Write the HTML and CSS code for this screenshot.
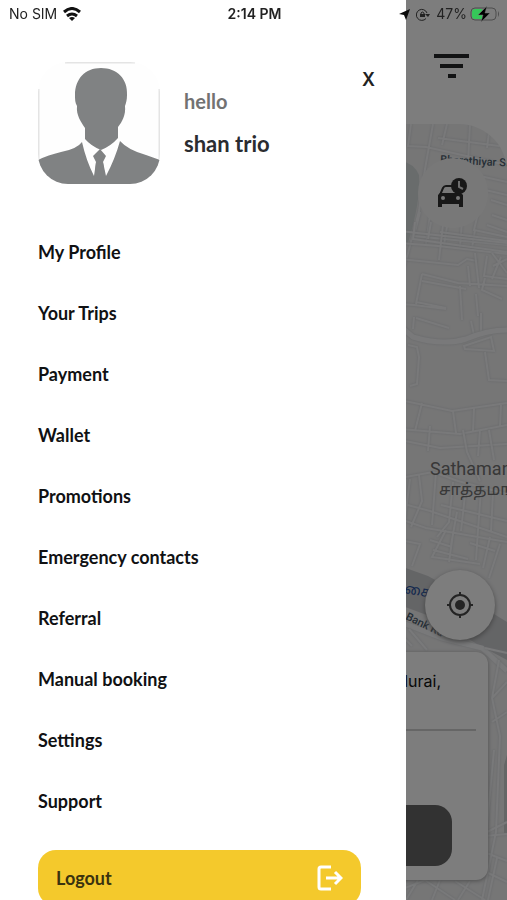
FILE: index.html
```html
<!DOCTYPE html>
<html lang="en">
<head>
<meta charset="utf-8">
<meta name="viewport" content="width=device-width, initial-scale=1">
<title>Menu</title>
<link rel="stylesheet" href="styles.css">
</head>
<body>
<main class="ride">
  <header class="ride-header">
    <button class="icon-button" aria-label="Open menu">
      <svg width="36" height="24" viewBox="0 0 36 24"><path d="M0 0h35v4H0zM6 10h23v4H6zM14 20h8v4h-8z" fill="#242629"/></svg>
    </button>
  </header>
  <section class="map-area">
    <svg class="map" viewBox="400 124 107 776" preserveAspectRatio="xMaxYMin slice" aria-hidden="true">
      <path d="M400 160q15 4 19 15 2 25-11 68l-8 8z" fill="#d2d9d9"/>
      <path d="M400 566l28 10 40 22 39 24v38l-30-16-45-27-32-12z" fill="#c9cacd"/>
      <path d="M507 755l-3 10v68h3z" fill="#cacccd"/>
      <g class="roads">
        <path d="M433 124l-8 45-6 42-12 46-7 25M411 124l-3 22 18 1 81 18M438 138l69 9M470 124l-2 39M447 124l-5 21M490 124l-3 24M424 176l83 19M480 176l27 6M484 188l-10 42 33 7M491 200l16 5M492 215l15 5M487 225l20 7M420 212l-6 24 93 9M430 215l-4 29M448 220l-4 25M462 221l-2 26M475 230l-3 18"/>
        <path d="M400 231l107 12M415 222l-2 18M431 222l-3 17M443 224l-4 36M400 243l38 3 69 8M400 259l58 6 9-6 10 2M440 232l67 9M413 239l94 13"/>
        <path d="M422 274l-6 30M422 274l36 9 49 3M422 281l44 8M416 302l30 6M460 286l2 34M400 304l14 1 32 4M416 318l33 10M414 317l-1 12M476 294l2 22M481 313v18M471 321l3 14M475 253l4 35M468 266l2 20M487 256l-3 20 23 3M492 253l15 20M501 257l-9 22M485 278l-3 12 20 9M507 259l-14 7"/>
        <path class="major" d="M400 326l13 11q30 9 53 2 21-9 41-9"/>
        <path d="M464 346l27-9 3 14-29-2zM485 352l4 28 18 1M408 345l9 2 2 10-2 27-7 2"/>
        <path d="M400 400l52 11 55-8M422 403l-7 28M453 411l3 22M501 405l-1 22M400 429l60 5 47-9M430 426l-2 25M400 440l40 8 67-4M474 408l-1 23M480 430l-2 26"/>
        <path d="M463 430l4 22 13 29M489 430l5 30M400 478l33-6 25 9 49 13M410 479l-5 39M419 475l3 26-11 26M436 472l-4 53M400 503l30 8 77 26M400 519l26 9 81 14M453 482l-4 40-12 15M466 486l-5 45M481 490l-3 40-2 30M493 492l-2 40M441 505l66 16M457 512l-6 33M446 530l-14 27 48 7M453 534l-4 28M490 537l-7 31M500 544l-11 34M430 540l22 7M433 550l35 9M470 543l25 8M400 540l20 4-8 22"/>
        <path class="major" d="M400 622l42 16 40 10 25 23"/>
        <path d="M400 634l12 12M409 629l18 21M485 648l22 5M499 660l-7 38 8 38-4 96-14 68M492 698l15-16M492 722l15-10M494 750l-8 86 21-2M487 832l20-10M484 852l23 9M482 870l25 12M497 858l-9 42M400 890l25-10 30 20M418 880l-12 20M440 880l-8 20M455 881l30 19M470 881l-12 19"/>
      </g>
      <text class="street" x="440" y="163" transform="rotate(3 440 163)">Bharathiyar St</text>
      <text class="town" x="430" y="475">Sathamangalam</text>
      <text class="town-local" x="439" y="495">சாத்தமங்கலம்</text>
      <text class="river" x="404" y="593" transform="rotate(10 404 593)">கை</text>
      <text class="street" x="405" y="619" transform="rotate(26 405 619)">Bank Rd</text>
    </svg>
    <button class="round-button schedule" aria-label="Ride later">
      <svg width="32" height="32" viewBox="0 0 32 32">
        <path d="M3 18l3-7q1-2 3-2h7" fill="none" stroke="#303030" stroke-width="2"/>
        <path fill-rule="evenodd" d="M1 18l2-2h21l2 2v12h-4v-3H5v3H1zM6 19a2 2 0 1 0 0 4 2 2 0 0 0 0-4zM21 19a2 2 0 1 0 0 4 2 2 0 0 0 0-4z" fill="#303030"/>
        <circle cx="22" cy="9" r="8" fill="#303030"/><path d="M22 4v6l4 2" fill="none" stroke="#ddd" stroke-width="2"/>
      </svg>
    </button>
    <button class="round-button locate" aria-label="My location">
      <svg width="30" height="30" viewBox="0 0 30 30"><g fill="none" stroke="#484848" stroke-width="2"><circle cx="15" cy="15" r="10"/><path d="M15 2v4M15 24v4M2 15h4M24 15h4"/></g><circle cx="15" cy="15" r="5" fill="#484848"/></svg>
    </button>
    <section class="trip-card">
      <p class="address">durai,</p>
      <button class="confirm" aria-label="Confirm"></button>
    </section>
  </section>
</main>
<div class="scrim"></div>

<aside class="drawer">
  <div class="profile">
    <svg class="avatar" viewBox="0 0 122 122" role="img" aria-label="Profile photo">
      <rect width="122" height="122" fill="#fefefe"/>
      <path d="M27 0h70M0 27v70M122 27v70" fill="none" stroke="#e4e4e4" stroke-width="3"/>
      <g fill="#808283">
        <path d="M63 6c16 0 27 11 26 27 0 5-1 8-2 11 1 9-3 16-7 21v11q-7 8-17 12-10-4-16-11V66c-4-6-9-13-8-22-2-3-2-7-2-11C37 17 47 6 63 6z"/>
        <path d="M44 80q4 18 12 34l2-14-3-6 7-7 6 7-3 6 3 14q9-17 14-35 8 9 26 14l14 5v24H0V98q10-5 23-8 16-3 21-10z"/>
        <path d="M58 100l-2 22h12l-3-22z"/>
      </g>
    </svg>
    <div class="greeting">
      <p class="hello">hello</p>
      <h1 class="name">shan trio</h1>
    </div>
    <button class="close" aria-label="Close menu">X</button>
  </div>
  <nav>
    <ul class="menu">
      <li><a href="#">My Profile</a></li>
      <li><a href="#">Your Trips</a></li>
      <li><a href="#">Payment</a></li>
      <li><a href="#">Wallet</a></li>
      <li><a href="#">Promotions</a></li>
      <li><a href="#">Emergency contacts</a></li>
      <li><a href="#">Referral</a></li>
      <li><a href="#">Manual booking</a></li>
      <li><a href="#">Settings</a></li>
      <li><a href="#">Support</a></li>
    </ul>
  </nav>
  <button class="logout">Logout
    <svg width="26" height="26" viewBox="0 0 26 26" fill="none" stroke="#fff" stroke-width="3"><path d="M14 2H4q-2 0-2 2v18q0 2 2 2h10M9 13h15M18 7l6 6-6 6"/></svg>
  </button>
</aside>

<div class="status">
  <div class="carrier">No SIM
    <svg width="18" height="14" viewBox="0 0 18 14"><g fill="none" stroke="#111" stroke-width="3"><path d="M1 5q8-7 16 0M4 9q5-4 10 0"/></g><path d="M9 14l-3-3q3-2 6 0z" fill="#111"/></svg>
  </div>
  <div class="time">2:14 PM</div>
  <div class="indicators">
    <svg width="11" height="11" viewBox="0 0 11 11"><path d="M11 0L7 11 5 6 0 5z" fill="#0a0a0a"/></svg>
    <svg width="14" height="13" viewBox="0 0 14 13"><path d="M10 10.500a5.500 5.500 0 1 1 1-5.500" fill="none" stroke="#222"/><path d="M9 6h5l-2 3z" fill="#222"/><rect x="4" y="6" width="5" height="3" fill="#222"/><path d="M5 6V5q1-2 3 0v1" fill="none" stroke="#222"/></svg>
    <span class="percent">47%</span>
    <svg width="30" height="16" viewBox="0 0 30 16"><rect x="1" y="2" width="25" height="12" rx="4" fill="none" stroke="#4e4e4e"/><path d="M5 3h7v10H5q-3 0-3-3V6q0-3 3-3z" fill="#35c759"/><path d="M28 5q2 3 0 6z" fill="#4e4e4e"/><path d="M17 0L8 9h5l-2 7 9-9h-5z" fill="#000" stroke="#777" stroke-width=".5"/></svg>
  </div>
</div>
</body>
</html>
```

FILE: styles.css
```css
* { box-sizing: border-box; }
body {
  margin: 0;
  height: 100vh;
  overflow: hidden;
  position: relative;
  background: #fff;
  font-family: Lato, "Noto Sans", sans-serif;
}
button { border: 0; padding: 0; font: inherit; cursor: pointer; }
p, h1, ul { margin: 0; padding: 0; }

/* Booking screen behind the drawer */
.ride { height: 100vh; display: flex; flex-direction: column; background: #fafafa; }
.ride-header { display: flex; justify-content: flex-end; padding: 54px 37px 46px; }
.icon-button { display: flex; background: none; }
.map-area {
  flex: 1;
  position: relative;
  display: flex;
  flex-direction: column;
  align-items: flex-end;
  padding: 34px 19px 20px;
  overflow: hidden;
  background: #ececed;
  border-radius: 48px 48px 0 0;
}
.map { position: absolute; top: 0; right: 0; height: 100%; }
.roads path { fill: none; stroke: #f2f3f5; stroke-width: 2; filter: drop-shadow(0 0 1px #ccced1); }
.roads .major { stroke-width: 5; }
.street { font: 500 11px Roboto, sans-serif; fill: #4c5d6c; }
.town { font: 18px Roboto, sans-serif; fill: #707070; }
.town-local { font: 16px "Noto Sans Tamil", "Noto Sans", sans-serif; fill: #707070; }
.river { font: 14px "Noto Sans Tamil", "Noto Sans", sans-serif; fill: #264f9b; }
.round-button {
  position: relative;
  display: grid;
  place-items: center;
  width: 70px;
  height: 70px;
  border-radius: 50%;
  background: #f1f1f1;
}
.locate { margin: auto -7px 12px 0; background: #fafafa; box-shadow: 0 2px 5px #888; }
.trip-card {
  position: relative;
  width: 100%;
  padding: 16px 12px 14px;
  border-radius: 12px;
  background: #fafafa;
  box-shadow: 0 1px 4px #999;
}
.address {
  height: 63px;
  padding-right: 35px;
  border-bottom: 2px solid #ccc;
  font: 16px/26px Inter, sans-serif;
  text-align: right;
  color: #111;
}
.confirm { display: block; width: calc(100% - 48px); height: 61px; margin: 74px auto 0; border-radius: 17px; background: #646464; }
.scrim { position: absolute; inset: 0; background: rgba(0, 0, 0, .5); }

/* Drawer */
.drawer {
  position: absolute;
  inset: 0 auto 0 0;
  width: 80%;
  padding: 62px 45px 0 38px;
  overflow-y: auto;
  scrollbar-width: none;
  background: #fff;
}
.profile { display: flex; align-items: flex-start; }
.avatar { width: 122px; height: 122px; border-radius: 30px; }
.greeting { flex: 1; padding: 26px 0 0 24px; }
.hello { font-size: 20px; line-height: 26px; font-weight: 700; color: #727272; }
.name { margin-top: 16px; font-size: 22px; line-height: 28px; font-weight: 700; color: #2b2c30; }
.close { width: 20px; margin: 6px -18px 0 0; background: none; font: 600 18px/24px Inter, sans-serif; color: #222; }
.menu { margin: 38px 0 18px; list-style: none; }
.menu a { display: block; font-size: 18px; line-height: 61px; font-weight: 700; color: #101113; text-decoration: none; }
.logout {
  display: flex;
  align-items: center;
  justify-content: space-between;
  width: 100%;
  height: 56px;
  padding: 0 18px;
  border-radius: 18px;
  background: #f4c92c;
  font-size: 18px;
  font-weight: 700;
  color: #3a330f;
}

/* Status bar */
.status {
  position: absolute;
  inset: 0 0 auto;
  display: grid;
  grid-template-columns: 1fr auto 1fr;
  align-items: center;
  height: 28px;
  padding: 0 7px 0 9px;
  font: 14px/20px Inter, sans-serif;
  color: #222;
}
.carrier, .indicators { display: flex; align-items: center; gap: 6px; }
.time { font-weight: 600; }
.indicators { justify-content: flex-end; }
.indicators svg:last-child { margin-left: -3px; }
```
